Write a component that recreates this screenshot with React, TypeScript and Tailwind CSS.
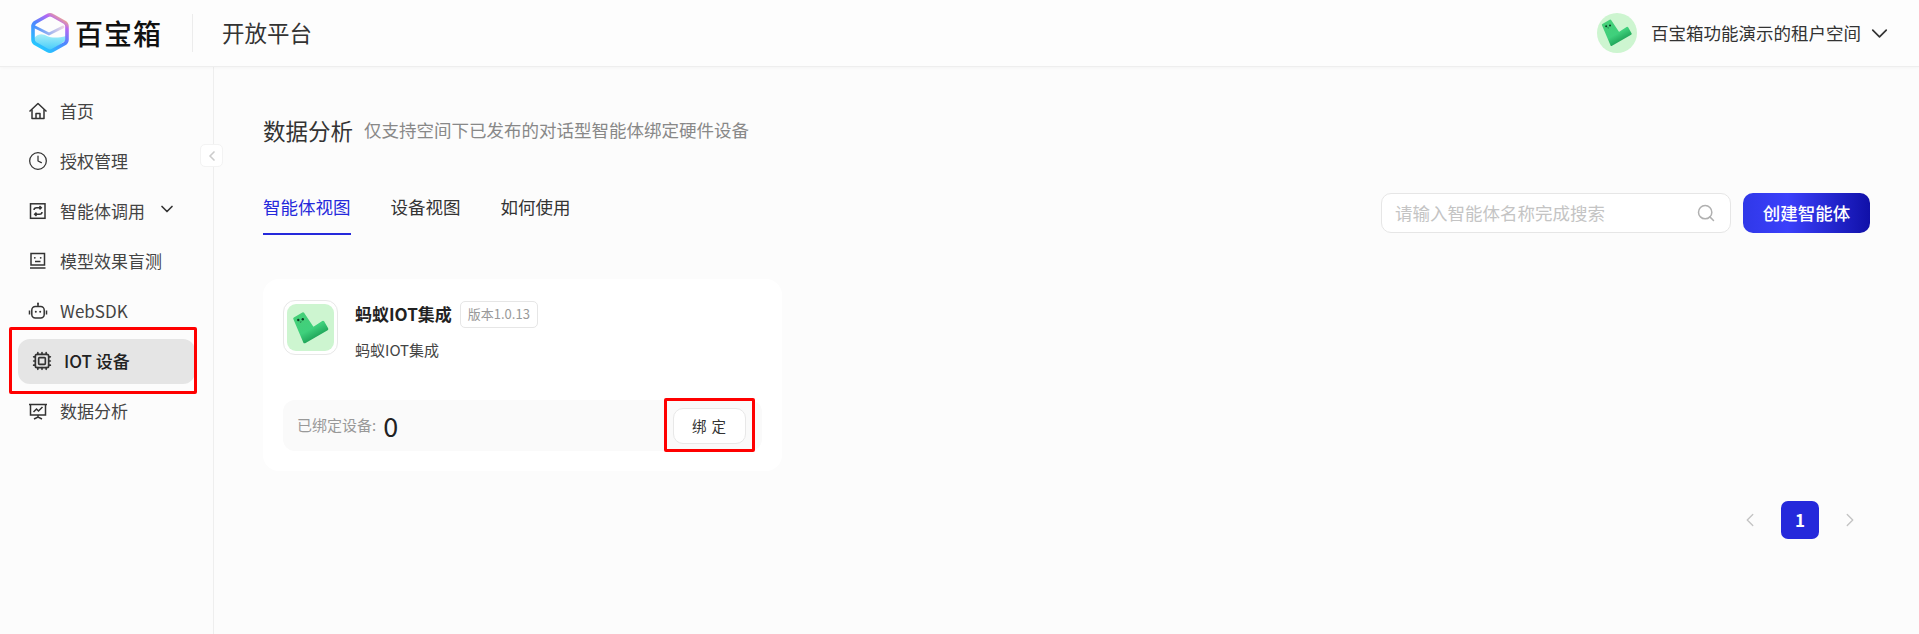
import * as React from "react";
import {
  Clock,
  ChevronDown,
  ChevronLeft,
  ChevronRight,
  Cpu,
  Search,
} from "lucide-react";

function LogoMark() {
  return (
    <svg width="40" height="42" viewBox="0 0 40 42" fill="none">
      <defs>
        <linearGradient id="logo-ring" x1="8" y1="38" x2="32" y2="3" gradientUnits="userSpaceOnUse">
          <stop offset="0" stopColor="#1fd0ff" />
          <stop offset="0.5" stopColor="#4f86ff" />
          <stop offset="0.8" stopColor="#b868f2" />
          <stop offset="1" stopColor="#ffbe70" />
        </linearGradient>
        <linearGradient id="logo-wave" x1="20" y1="20" x2="20" y2="40" gradientUnits="userSpaceOnUse">
          <stop offset="0" stopColor="#b5f3f6" />
          <stop offset="1" stopColor="#38c8fb" />
        </linearGradient>
        <linearGradient id="logo-flap" x1="3" y1="14" x2="36" y2="14" gradientUnits="userSpaceOnUse">
          <stop offset="0" stopColor="#3f8dff" />
          <stop offset="1" stopColor="#fbdbe2" />
        </linearGradient>
      </defs>
      <path d="M4 26c5-5 9-4 13-2 5 2 11 2 19 0v4L20 40 4 30z" fill="url(#logo-wave)" />
      <path d="M3 14l16 8 14-7" stroke="url(#logo-flap)" strokeWidth="2.800" strokeLinecap="round" />
      <path
        d="M17.500 3.500Q20 2 22.500 3.500L34.500 10.200Q37 11.700 37 14.500V27.500Q37 30.300 34.500 31.800L22.500 38.500Q20 40 17.500 38.500L5.500 31.800Q3 30.300 3 27.500V14.500Q3 11.700 5.500 10.200z"
        stroke="url(#logo-ring)"
        strokeWidth="3.600"
        strokeLinejoin="round"
      />
    </svg>
  );
}

function BotMark({ size, id }: { size: number; id: string }) {
  return (
    <svg width={size} height={size} viewBox="0 0 40 40" fill="none">
      <defs>
        <linearGradient id={id} x1="8" y1="6" x2="24" y2="36" gradientUnits="userSpaceOnUse">
          <stop offset="0" stopColor="#46cf78" />
          <stop offset="0.55" stopColor="#3fd07c" />
          <stop offset="1" stopColor="#109048" />
        </linearGradient>
      </defs>
      <path
        d="M3.500 10.500 12 5.500 22 20.500 32 14 36 21 13.500 34z"
        fill={`url(#${id})`}
        stroke={`url(#${id})`}
        strokeWidth="2.600"
        strokeLinejoin="round"
      />
      <circle cx="7.300" cy="12" r="1.200" fill="#0c3b23" />
      <circle cx="11.800" cy="11.200" r="1.200" fill="#0c3b23" />
      <path d="M8.800 13.800q.9.600 1.600 0" stroke="#0c3b23" strokeWidth=".7" />
    </svg>
  );
}

function HomeIcon() {
  return (
    <svg width="20" height="20" viewBox="0 0 20 20" fill="none" stroke="#333" strokeWidth="1.500" strokeLinejoin="round">
      <path d="M1.500 10.500 10 2.500l8.500 8" />
      <path d="M4 8.500v9h12v-9M8 17.500v-5h4v5" />
    </svg>
  );
}

function SwapIcon() {
  return (
    <svg width="20" height="20" viewBox="0 0 20 20" fill="none" stroke="#333" strokeWidth="1.500">
      <rect x="2.500" y="2.800" width="14.500" height="14.500" />
      <path d="M6 9c0-1.500 1-2.300 2.500-2.300H13M11.500 5l1.800 1.700-1.800 1.700M14 11c0 1.500-1 2.300-2.500 2.300H7M8.500 15l-1.800-1.700L8.500 11.600" />
    </svg>
  );
}

function FaceIcon() {
  return (
    <svg width="20" height="20" viewBox="0 0 20 20" fill="none" stroke="#333" strokeWidth="1.500">
      <rect x="3" y="2.500" width="13.500" height="11.500" />
      <path d="M2 17h15.500M7 10.500h5.500" />
      <circle cx="6.800" cy="6.800" r=".9" fill="#333" stroke="none" />
      <circle cx="12.700" cy="6.800" r=".9" fill="#333" stroke="none" />
    </svg>
  );
}

function RobotIcon() {
  return (
    <svg width="20" height="20" viewBox="0 0 20 20" fill="none" stroke="#333" strokeWidth="1.500">
      <rect x="3.800" y="5.500" width="12.400" height="11.500" rx="3.500" />
      <path d="M10 5.500V3M1.500 9.500v4M18.500 9.500v4" />
      <circle cx="10" cy="2.500" r="1" fill="#333" stroke="none" />
      <circle cx="7.800" cy="10.800" r="1" fill="#333" stroke="none" />
      <circle cx="12.200" cy="10.800" r="1" fill="#333" stroke="none" />
    </svg>
  );
}

function ChartBoardIcon() {
  return (
    <svg width="20" height="20" viewBox="0 0 20 20" fill="none" stroke="#333" strokeWidth="1.500">
      <path d="M1 3.500h18M2.500 3.500v10.500h15V3.500M10 14v2.500M6 18l4-2 4 2" />
      <path d="M5.500 11l3-3 2 2 4-4" />
    </svg>
  );
}

const navItems = [
  { label: "首页", icon: <HomeIcon /> },
  { label: "授权管理", icon: <Clock size={20} strokeWidth={1.500} color="#333" /> },
  { label: "智能体调用", icon: <SwapIcon />, more: true },
  { label: "模型效果盲测", icon: <FaceIcon /> },
  { label: "WebSDK", icon: <RobotIcon /> },
  { label: "IOT 设备", icon: <Cpu size={20} strokeWidth={2} color="#333" />, active: true },
  { label: "数据分析", icon: <ChartBoardIcon /> },
];

export default function App() {
  return (
    <div className="flex h-screen flex-col overflow-hidden bg-[#fcfcfc] font-['Noto_Sans_CJK_SC','Noto_Sans',sans-serif] text-[#333]">
      <header className="z-10 flex h-[67px] shrink-0 items-center justify-between border-b border-[#eeeeee] bg-[#fdfdfd] pl-[30px] pr-[26px] shadow-[0_1px_3px_rgba(0,0,0,0.03)]">
        <div className="flex items-center">
          <LogoMark />
          <span className="ml-[5px] text-[28px] font-medium leading-none tracking-[1px] text-[#111]">
            百宝箱
          </span>
          <div className="ml-[30px] h-[38px] w-px bg-[#ececec]" />
          <span className="ml-[29px] text-[22.500px] text-[#333]">开放平台</span>
        </div>
        <div className="flex items-center">
          <div className="flex h-10 w-10 items-center justify-center rounded-full bg-[#cdf5d0]">
            <BotMark size={34} id="bot-header" />
          </div>
          <span className="ml-[14px] text-[17.500px] text-[#333]">百宝箱功能演示的租户空间</span>
          <ChevronDown size={27} strokeWidth={1.500} color="#333" className="ml-[5px]" />
        </div>
      </header>

      <div className="flex min-h-0 flex-1">
        <aside className="relative w-[214px] shrink-0 border-r border-[#eeeeee] px-[18px] pt-[19px]">
          {navItems.map((item) => (
            <div key={item.label} className="relative flex h-[50px] items-center">
              {item.active && (
                <div className="pointer-events-none absolute -left-[9px] -right-[2px] -top-[9px] bottom-[-8px] rounded-[2px] border-[3px] border-[#ff0000]" />
              )}
              <div
                className={
                  item.active
                    ? "flex h-[45px] w-[177px] items-center gap-3 rounded-[12px] bg-[#e5e5e5] pl-[14px] font-medium text-[#222]"
                    : "flex items-center gap-[12px] pl-[10px] text-[#444]"
                }
              >
                {item.icon}
                <span className="text-[17px]">{item.label}</span>
                {item.more && (
                  <ChevronDown size={20} strokeWidth={2} color="#333" className="-mt-1" />
                )}
              </div>
            </div>
          ))}
          <button className="absolute -right-[10px] top-[77px] flex h-[23px] w-[23px] items-center justify-center rounded-[5px] border border-[#f3f3f3] bg-white">
            <ChevronLeft size={16} strokeWidth={2.500} color="#cccccc" />
          </button>
        </aside>

        <main className="min-w-0 flex-1 pl-[49px] pr-[49px] pt-[46px]">
          <div className="flex items-center">
            <h1 className="text-[22.500px] leading-[34px] text-[#333]">数据分析</h1>
            <span className="ml-[11px] text-[17.500px] text-[#888]">
              仅支持空间下已发布的对话型智能体绑定硬件设备
            </span>
          </div>

          <div className="mt-[46px] flex items-start justify-between">
            <div className="flex gap-[40px] text-[17.500px]">
              <div className="h-[42px] border-b-2 border-[#2529db] leading-[28px] text-[#2529db]">
                智能体视图
              </div>
              <div className="leading-[28px] text-[#333]">设备视图</div>
              <div className="leading-[28px] text-[#333]">如何使用</div>
            </div>
            <div className="flex gap-3">
              <div className="flex h-[40px] w-[350px] items-center justify-between rounded-[10px] border border-[#e6e6e6] bg-white pl-[13px] pr-[14px]">
                <span className="text-[17.500px] text-[#c4c4c4]">请输入智能体名称完成搜索</span>
                <Search size={20} strokeWidth={1.800} color="#b0b0b0" />
              </div>
              <button className="h-[40px] w-[127px] rounded-[10px] bg-[linear-gradient(90deg,#3038e8,#3b40fb_35%,#1010a8)] text-[17.500px] font-medium text-white">
                创建智能体
              </button>
            </div>
          </div>

          <div className="mt-[44px] w-[519px] rounded-[16px] bg-white px-5 pb-5 pt-[21px]">
            <div className="flex">
              <div className="h-[55px] w-[55px] shrink-0 rounded-[12px] border border-[#e8e8e8] bg-white p-[3px]">
                <div className="flex h-full w-full items-center justify-center rounded-[9px] bg-[#cdf5d0]">
                  <BotMark size={40} id="bot-card" />
                </div>
              </div>
              <div className="ml-[17px]">
                <div className="flex items-center">
                  <span className="text-[17px] font-bold leading-[28px] text-[#222]">蚂蚁IOT集成</span>
                  <span className="ml-[8px] flex h-[27px] w-[78px] items-center justify-center rounded-[5px] border border-[#e6e6e6] text-[13px] text-[#999]">
                    版本1.0.13
                  </span>
                </div>
                <p className="mt-[10px] text-[15px] leading-[24px] text-[#444]">蚂蚁IOT集成</p>
              </div>
            </div>

            <div className="mt-[38px] flex h-[51px] items-center justify-between rounded-[12px] bg-[#fafafa] pl-[14px] pr-[16px]">
              <div className="flex items-center">
                <span className="text-[15px] text-[#999]">已绑定设备:</span>
                <span className="ml-[7px] text-[27px] leading-none text-[#222]">0</span>
              </div>
              <div className="relative">
                <div className="pointer-events-none absolute -bottom-[8px] -left-[9px] -right-[9px] -top-[10px] rounded-[2px] border-[3px] border-[#ff0000]" />
                <button className="h-[36px] w-[73px] rounded-[10px] border border-[#e8e8e8] bg-white text-[14.500px] tracking-[1px] text-[#333]">
                  绑 定
                </button>
              </div>
            </div>
          </div>

          <div className="mt-[30px] flex items-center justify-end pr-[9px]">
            <ChevronLeft size={22} strokeWidth={1.500} color="#c4c4c4" />
            <div className="mx-[20px] flex h-[38px] w-[38px] items-center justify-center rounded-[7px] bg-[#2529db] text-[17px] font-bold text-white">
              1
            </div>
            <ChevronRight size={22} strokeWidth={1.500} color="#c4c4c4" />
          </div>
        </main>
      </div>
    </div>
  );
}
